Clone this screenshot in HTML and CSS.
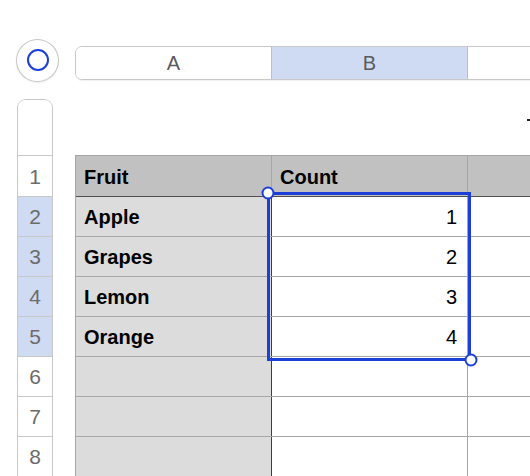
FILE: index.html
```html
<!DOCTYPE html>
<html>
<head>
<meta charset="utf-8">
<link rel="stylesheet" href="styles.css">
</head>
<body>
<div class="app">
  <div class="left">
    <div class="select-all"><span class="ring"></span></div>
    <div class="row-headers">
      <div class="rh corner"></div>
      <div class="rh first">1</div>
      <div class="rh sel">2</div>
      <div class="rh sel">3</div>
      <div class="rh sel">4</div>
      <div class="rh sel">5</div>
      <div class="rh">6</div>
      <div class="rh">7</div>
      <div class="rh">8</div>
    </div>
  </div>
  <div class="right">
    <div class="col-headers">
      <div class="ch">A</div>
      <div class="ch sel">B</div>
      <div class="ch rest"></div>
    </div>
    <div class="title"><span class="mark"></span></div>
    <div class="sheet">
      <div class="row head">
        <div class="cell c1">Fruit</div>
        <div class="cell c2">Count</div>
        <div class="cell c3"></div>
      </div>
      <div class="row">
        <div class="cell c1">Apple</div>
        <div class="cell c2 num">1</div>
        <div class="cell c3"></div>
      </div>
      <div class="row">
        <div class="cell c1">Grapes</div>
        <div class="cell c2 num">2</div>
        <div class="cell c3"></div>
      </div>
      <div class="row">
        <div class="cell c1">Lemon</div>
        <div class="cell c2 num">3</div>
        <div class="cell c3"></div>
      </div>
      <div class="row">
        <div class="cell c1">Orange</div>
        <div class="cell c2 num">4</div>
        <div class="cell c3"></div>
      </div>
      <div class="row">
        <div class="cell c1"></div>
        <div class="cell c2"></div>
        <div class="cell c3"></div>
      </div>
      <div class="row">
        <div class="cell c1"></div>
        <div class="cell c2"></div>
        <div class="cell c3"></div>
      </div>
      <div class="row">
        <div class="cell c1"></div>
        <div class="cell c2"></div>
        <div class="cell c3"></div>
      </div>
      <div class="selection">
        <span class="handle tl"></span>
        <span class="handle br"></span>
      </div>
    </div>
  </div>
</div>
</body>
</html>
```

FILE: styles.css
```css
* { box-sizing: border-box; }

html, body {
  margin: 0;
  padding: 0;
  background: #ffffff;
  overflow: hidden;
}

body {
  width: 530px;
  height: 476px;
  font-family: "Liberation Sans", Arial, sans-serif;
}

.app {
  display: flex;
  width: 530px;
  height: 476px;
  overflow: hidden;
}

.left {
  flex: 0 0 75px;
  display: flex;
  flex-direction: column;
  align-items: flex-start;
}

.select-all {
  margin-top: 39px;
  margin-left: 16px;
  width: 43px;
  height: 43px;
  border-radius: 50%;
  border: 1px solid #c6c6c6;
  background: #fff;
  box-shadow: 0 1px 2px rgba(0,0,0,0.08);
  display: flex;
  align-items: center;
  justify-content: center;
}

.ring {
  width: 22px;
  height: 22px;
  border-radius: 50%;
  border: 2.5px solid #1c3fd8;
}

.row-headers {
  margin-top: 17px;
  margin-left: 17px;
  width: 36px;
  border: 1px solid #c8c8c8;
  border-bottom: none;
  border-radius: 9px 9px 0 0;
  overflow: hidden;
}

.rh {
  height: 40px;
  border-bottom: 1px solid #c8c8c8;
  display: flex;
  align-items: center;
  justify-content: center;
  font-size: 21px;
  color: #6b6b6b;
  background: #fff;
  padding-top: 2px;
}

.rh.corner { height: 56px; }
.rh.first { height: 41px; }
.rh.sel { background: #cfdaf3; }

.right {
  flex: 1 1 auto;
  display: flex;
  flex-direction: column;
  overflow: hidden;
  min-width: 0;
}

.col-headers {
  margin-top: 46px;
  height: 34px;
  width: 640px;
  display: flex;
  border: 1px solid #c8c8c8;
  border-radius: 7px;
  box-shadow: 0 1px 1px rgba(0,0,0,0.06);
  overflow: hidden;
  flex: 0 0 auto;
}

.ch {
  flex: 0 0 195px;
  display: flex;
  align-items: center;
  justify-content: center;
  font-size: 20px;
  color: #5a5a5f;
  background: #fff;
  padding-top: 1px;
}

.ch.sel {
  flex: 0 0 197px;
  background: #cfdaf3;
  border-left: 1px solid #b3bed8;
  border-right: 1px solid #b3bed8;
}

.ch.rest { flex: 1 1 auto; }

.title {
  height: 75px;
  flex: 0 0 auto;
  display: flex;
  justify-content: flex-end;
  align-items: center;
  padding-top: 4px;
}

.mark {
  width: 3px;
  height: 2px;
  background: #222;
}

.sheet {
  position: relative;
  width: 640px;
  border-top: 1px solid #a6a6a6;
  border-left: 1px solid #a6a6a6;
  flex: 0 0 auto;
}

.row {
  display: flex;
  height: 40px;
  border-bottom: 1px solid #a6a6a6;
}

.row.head {
  height: 41px;
  background: #c1c1c1;
  border-bottom: 1px solid #505050;
}

.cell {
  display: flex;
  align-items: center;
  font-size: 20px;
  color: #000;
  padding: 2px 9px 0 8px;
}

.c1 {
  flex: 0 0 196px;
  background: #dcdcdc;
  border-right: 1px solid #3e3e3e;
  font-weight: bold;
}

.c2 {
  flex: 0 0 196px;
  border-right: 1px solid #a6a6a6;
  background: #fff;
}

.c3 { flex: 1 1 auto; background: #fff; }

.row.head .cell {
  background: #c1c1c1;
  font-weight: bold;
}

.row.head .c1 { border-right: 1px solid #a6a6a6; }

.num {
  justify-content: flex-end;
  padding-right: 10px;
}

.selection {
  position: absolute;
  left: 191px;
  top: 36px;
  width: 204px;
  height: 169px;
  border: 3px solid #1c3fd8;
}

.handle {
  position: absolute;
  width: 13px;
  height: 13px;
  border-radius: 50%;
  background: #fff;
  border: 2.5px solid #1c3fd8;
  transform: translate(-50%, -50%);
}

.handle.tl { left: -2px; top: -2px; }
.handle.br { left: 201px; top: 165px; }
```
